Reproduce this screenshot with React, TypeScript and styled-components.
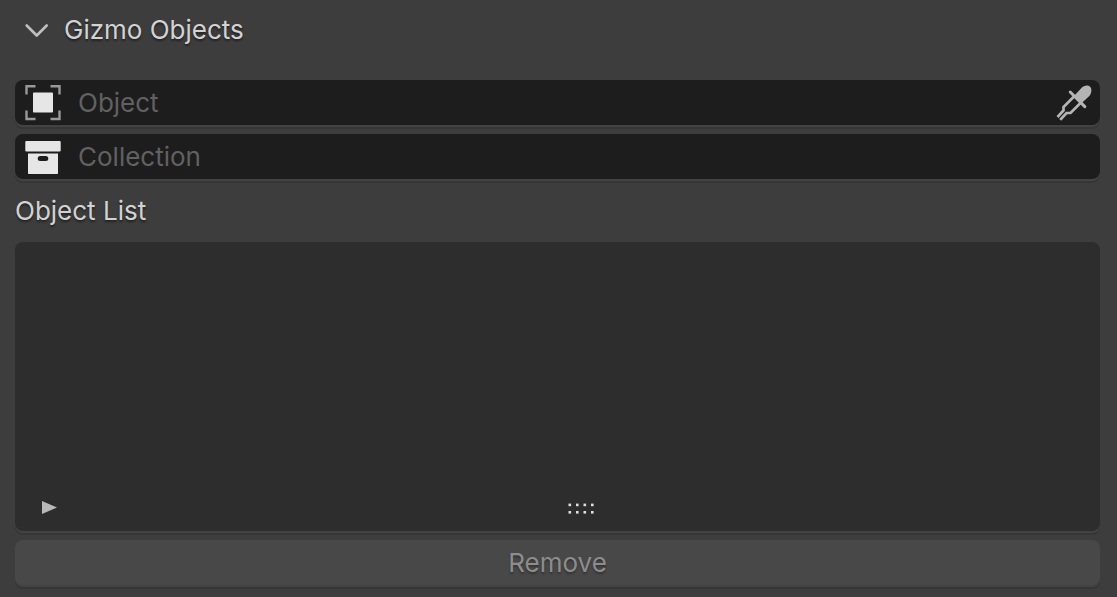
import React, { useState } from "react";
import styled, { createGlobalStyle } from "styled-components";

const Global = createGlobalStyle`
  *, *::before, *::after { box-sizing: border-box; }
  body {
    margin: 0;
    background: #3d3d3d;
    color: #d2d2d2;
    font: 400 26px/36px Inter, "Liberation Sans", sans-serif;
  }
  button, input { font: inherit; color: inherit; }
`;

const Panel = styled.section`
  display: flex;
  flex-direction: column;
`;

const HeaderButton = styled.button`
  display: flex;
  align-items: center;
  gap: 15px;
  width: 100%;
  height: 60px;
  padding: 0 24px;
  border: 0;
  background: none;
  text-align: left;
  text-shadow: 0 2px 2px #222;
`;

const Body = styled.div`
  display: flex;
  flex-direction: column;
  gap: 9px;
  padding: 20px 17px 12px 15px;
`;

const raised = "0 2px 0 #434343, 0 4px 0 #363636";

const Field = styled.div`
  display: flex;
  align-items: center;
  gap: 17px;
  height: 45px;
  padding: 1px 8px 0 10px;
  border-radius: 8px;
  background: #1d1d1d;
  box-shadow: ${raised};
`;

const FieldInput = styled.input`
  flex: 1;
  min-width: 0;
  height: 36px;
  padding: 0;
  border: 0;
  outline: 0;
  background: none;
  &::placeholder { color: #616161; opacity: 1; }
`;

const IconButton = styled.button`
  display: flex;
  padding: 0;
  border: 0;
  background: none;
`;

const ListLabel = styled.h3`
  margin: 5px 0 4px;
  font: inherit;
  text-shadow: 0 2px 2px #222;
`;

const ListBox = styled.div`
  display: flex;
  flex-direction: column;
  min-height: 289px;
  border-radius: 8px;
  background: #2d2d2d;
  box-shadow: ${raised};
`;

const ListItems = styled.ul`
  flex: 1;
  margin: 0;
  padding: 0;
  list-style: none;
`;

const ListFooter = styled.div`
  display: grid;
  grid-template-columns: 48px 1fr;
  align-items: center;
  height: 46px;
  padding-left: 24px;
`;

const Grip = styled.div`
  display: flex;
  justify-content: center;
  padding-right: 24px;
`;

const RemoveButton = styled.button`
  height: 45px;
  padding: 0;
  border: 0;
  border-radius: 8px;
  background: #484848;
  color: #8c8c8c;
  box-shadow: ${raised};
  text-shadow: 0 2px 2px #333;
`;

const Chevron = ({ open }: { open: boolean }) => (
  <svg width="25" height="24" viewBox="0 0 25 24" fill="none" stroke="#c0c0c0" strokeWidth="2.6" strokeLinecap="round" strokeLinejoin="round" aria-hidden="true">
    <path d={open ? "M2.7 7.5 12.7 17.5 22.7 7.5" : "M8 2 18 12 8 22"} />
  </svg>
);

const ObjectIcon = () => (
  <svg width="36" height="36" viewBox="0 0 36 36" aria-hidden="true">
    <rect x="8" y="7.6" width="20" height="20" rx="0.8" fill="#e6e6e6" />
    <path d="M1.5 9.500V1.2H10.500M25.500 1.2H34.500V9.500M34.500 25.500V34H25.500M10.500 34H1.500V25.500" fill="none" stroke="#999" strokeWidth="2.4" />
  </svg>
);

const CollectionIcon = () => (
  <svg width="36" height="36" viewBox="0 0 36 36" fill="#e6e6e6" aria-hidden="true">
    <rect x="0.3" y="2" width="35.4" height="10.4" rx="1" />
    <path fillRule="evenodd" d="M3 14.500H33V34.200Q33 35 32.2 35H3.800Q3 35 3 34.200ZM15.200 17A2.500 2.500 0 0 0 15.200 22H20.800A2.500 2.500 0 0 0 20.800 17Z" />
  </svg>
);

const EyedropperIcon = () => (
  <svg width="36" height="36" viewBox="0 0 36 36" aria-hidden="true">
    <path d="M18 11 25 3.500C27.500 1 30 0.200 32.500 0.800C35.500 1.800 36 5.500 34.800 8.500C34.200 10 33.300 11 32.500 11.800L25.500 18.300Z" fill="#b4b4b4" />
    <path d="M14.200 7 28.800 21.600" stroke="#b4b4b4" strokeWidth="3" strokeLinecap="round" />
    <path d="M18.500 11 7.500 22V25.500L1.500 32M25 17.500 14.500 28H10.500L4.200 34.800" fill="none" stroke="#b4b4b4" strokeWidth="2.700" />
  </svg>
);

export default function App() {
  const [open, setOpen] = useState(true);
  const [object, setObject] = useState("");
  const [collection, setCollection] = useState("");
  return (
    <Panel>
      <Global />
      <HeaderButton type="button" aria-expanded={open} onClick={() => setOpen(!open)}>
        <Chevron open={open} />
        Gizmo Objects
      </HeaderButton>
      {open && (
        <Body>
          <Field>
            <ObjectIcon />
            <FieldInput aria-label="Object" placeholder="Object" value={object} onChange={(e) => setObject(e.target.value)} />
            <IconButton type="button" aria-label="Pick object">
              <EyedropperIcon />
            </IconButton>
          </Field>
          <Field>
            <CollectionIcon />
            <FieldInput aria-label="Collection" placeholder="Collection" value={collection} onChange={(e) => setCollection(e.target.value)} />
          </Field>
          <ListLabel id="object-list">Object List</ListLabel>
          <ListBox>
            <ListItems aria-labelledby="object-list" />
            <ListFooter>
              <IconButton type="button" aria-label="Show filters">
                <svg width="20" height="16" viewBox="0 0 20 16" fill="#b9b9b9" aria-hidden="true">
                  <path d="M3 1 18 7.500 3 14Z" />
                </svg>
              </IconButton>
              <Grip>
                <svg width="28" height="12" viewBox="0 0 28 12" fill="#dedede" aria-hidden="true">
                  {[0, 1, 2, 3].map((i) => (
                    <g key={i}>
                      <rect x={0.5 + i * 7.5} y="1.6" width="2.600" height="2.600" />
                      <rect x={0.5 + i * 7.5} y="9" width="2.600" height="2.600" />
                    </g>
                  ))}
                </svg>
              </Grip>
            </ListFooter>
          </ListBox>
          <RemoveButton type="button" disabled>Remove</RemoveButton>
        </Body>
      )}
    </Panel>
  );
}
